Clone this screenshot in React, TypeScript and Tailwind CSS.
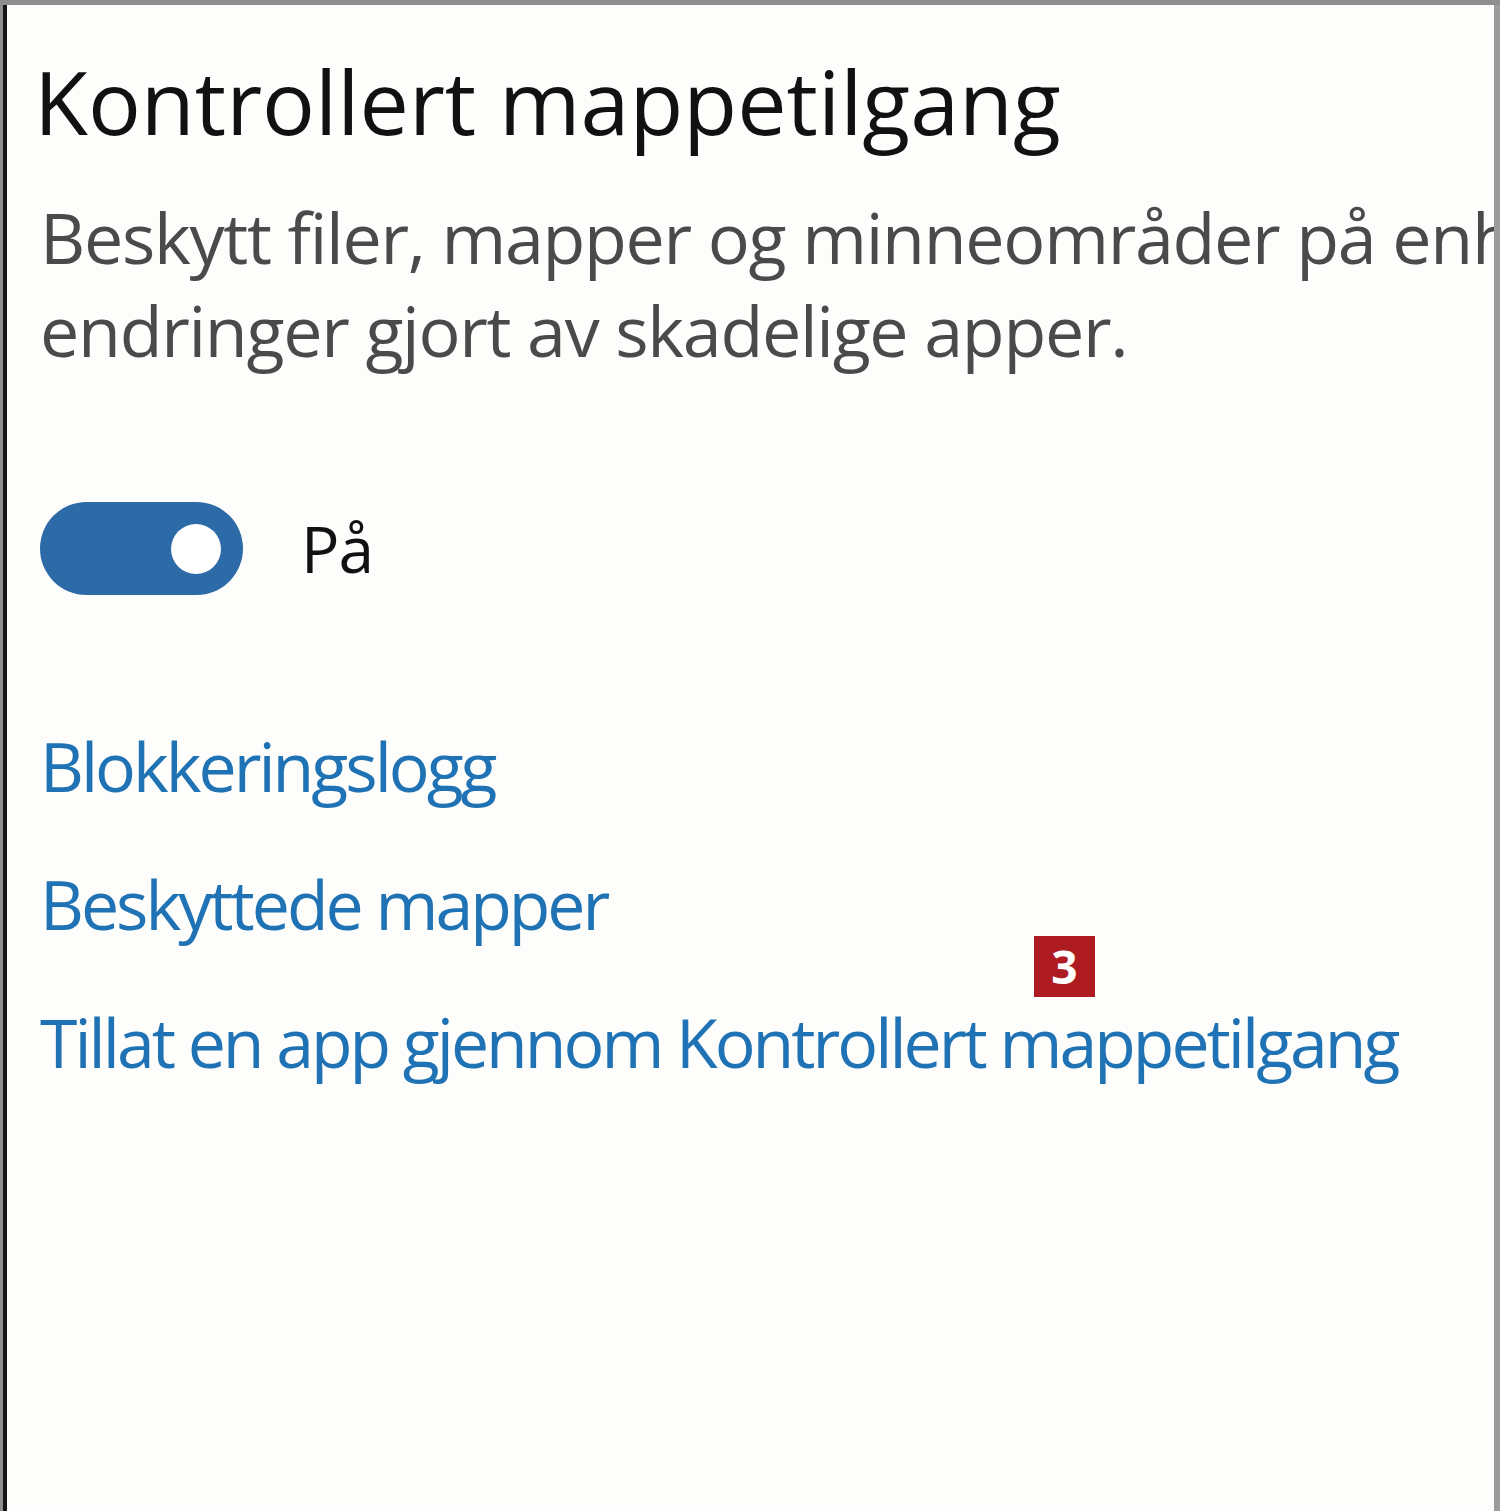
export default function App() {
  return (
    <div className="w-[1500px] h-[1511px] bg-[#8e8e8e] pl-[3px] pt-[5px] overflow-hidden" style={{ fontFamily: '"Open Sans", "Noto Sans", sans-serif' }}>
      <div className="h-full bg-[#fdfdfc] border-l-[4px] border-l-[#151515] border-r-[6px] border-r-[#9c9c9c] overflow-hidden">
        {/* Title */}
        <h1 className="pl-[27px] pt-[46px] text-[88px] leading-[100px] text-[#111] whitespace-nowrap tracking-[0px]">
          Kontrollert mappetilgang
        </h1>

        {/* Description */}
        <div className="pl-[33px] mt-[40px] text-[70px] leading-[93px] text-[#4a4a4a] whitespace-nowrap tracking-[-1.3px]">
          <p>Beskytt filer, mapper og minneområder på enheten mot uautoriserte</p>
          <p>endringer gjort av skadelige apper.</p>
        </div>

        {/* Toggle */}
        <div className="pl-[33px] mt-[125px] flex items-center gap-[58px]">
          <div className="w-[203px] h-[93px] rounded-full bg-[#2c6aa8] flex items-center justify-end pr-[22px]">
            <div className="w-[50px] h-[50px] rounded-full bg-white" />
          </div>
          <span className="text-[64px] leading-none text-[#111] tracking-[-1px]">På</span>
        </div>

        {/* Links */}
        <div className="pl-[33px] mt-[121px] flex flex-col gap-[38px] text-[#1f72b4] text-[68px] leading-[100px] tracking-[-3px] whitespace-nowrap">
          <a>Blokkeringslogg</a>
          <a>Beskyttede mapper</a>
          <div className="relative">
            <a>Tillat en app gjennom Kontrollert mappetilgang</a>
            <span className="absolute left-[994px] top-[-56px] w-[61px] h-[61px] bg-[#ae1c22] text-white font-bold text-[46px] leading-[61px] text-center tracking-normal">3</span>
          </div>
        </div>
      </div>
    </div>
  )
}
